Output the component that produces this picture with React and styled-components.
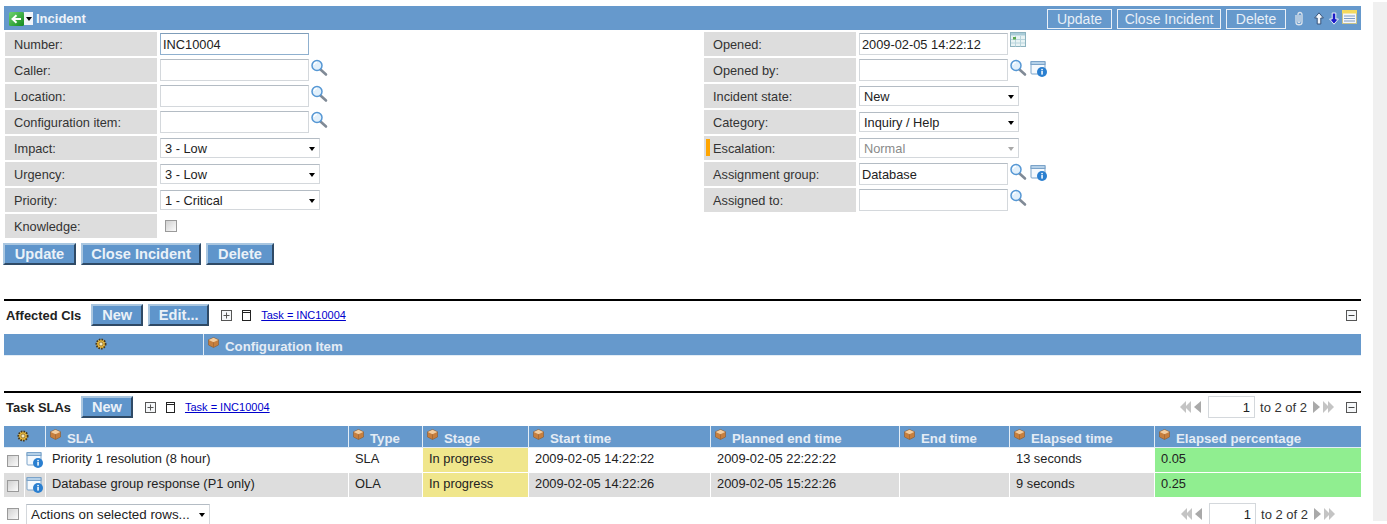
import React from "react";
import styled, { createGlobalStyle } from "styled-components";

const GlobalStyle = createGlobalStyle`
  html, body {
    margin: 0;
    padding: 0;
    background: #fff;
    overflow: hidden;
  }
  body {
    font-family: "Liberation Sans", Arial, sans-serif;
    font-size: 13px;
    color: #222;
  }
`;

const BLUE = "#6699cc";
const HEAD_TEXT = "#e4ecf5";

const Page = styled.div`
  display: flex;
  height: 524px;
  overflow: hidden;
`;
const Main = styled.div`
  flex: 0 0 1373px;
  padding: 6px 12px 0 4px;
  box-sizing: border-box;
`;
const ScrollRail = styled.div`
  flex: 0 0 14px;
  margin-top: 2px;
  height: 519px;
  background: #f0f0f0;
`;

const TitleBar = styled.div`
  display: flex;
  align-items: center;
  height: 24px;
  background: ${BLUE};
  padding: 0 4px 0 5px;
`;
const BackGroup = styled.div`
  display: flex;
  align-items: center;
  margin-top: 1px;
`;
const MenuCaret = styled.span`
  display: flex;
  align-items: center;
  justify-content: center;
  width: 9px;
  height: 13px;
  background: #f2f5f9;
  &::after {
    content: "";
    border-left: 3px solid transparent;
    border-right: 3px solid transparent;
    border-top: 4px solid #000;
  }
`;
const Title = styled.span`
  margin-left: 3px;
  font-size: 13px;
  font-weight: bold;
  color: #eef3f9;
`;
const TitleActions = styled.div`
  display: flex;
  align-items: center;
  margin-left: auto;
  margin-top: 1px;
`;
const TitleButton = styled.button`
  height: 20px;
  width: ${(p) => p.$w}px;
  margin-right: 5px;
  padding: 0;
  background: transparent;
  border: 1px solid #eaf0f7;
  color: #e8eff7;
  font: 14px "Liberation Sans", Arial, sans-serif;
`;
const TitleIcons = styled.div`
  display: flex;
  align-items: flex-start;
  height: 20px;
  margin-left: 2px;
  margin-top: -1px;
`;

const Form = styled.div`
  display: grid;
  grid-template-columns: 699px 1fr;
  padding: 2px 0 0 1px;
`;
const FormColumn = styled.div`
  display: flex;
  flex-direction: column;
  gap: 2px;
`;
const Row = styled.div`
  display: flex;
  align-items: center;
  height: 24px;
`;
const Label = styled.label`
  position: relative;
  display: flex;
  align-items: center;
  flex: 0 0 152px;
  height: 24px;
  margin-right: 3px;
  padding: 1px 0 0 9px;
  box-sizing: border-box;
  background: #dddddd;
  font-size: 12.75px;
  color: #333;
`;
const Mandatory = styled.span`
  position: absolute;
  left: 2px;
  top: 3px;
  width: 4px;
  height: 17px;
  background: #ffa500;
`;
const TextField = styled.input`
  width: 149px;
  height: 22px;
  box-sizing: border-box;
  padding: 1px 2px 0;
  border: 1px solid ${(p) => (p.$focus ? "#8fb0cf" : "#d4d8dc")};
  border-top-color: ${(p) => (p.$focus ? "#7f9db9" : "#b4bcc4")};
  background: #fff;
  color: #222;
  font: 12.8px "Liberation Sans", Arial, sans-serif;
  outline: none;
`;
const SelectBox = styled.div`
  position: relative;
  display: flex;
  align-items: center;
  flex: none;
  width: ${(p) => p.$w || 160}px;
  height: ${(p) => p.$h || 20}px;
  box-sizing: border-box;
  padding: 0 0 0 4px;
  border: 1px solid #d4d8dc;
  border-top-color: #b4bcc4;
  background: #fff;
  color: ${(p) => (p.$disabled ? "#8a8a8a" : "#222")};
  font-size: ${(p) => p.$size || 12.8}px;
  &::after {
    content: "";
    position: absolute;
    right: 4px;
    top: 8px;
    border-left: 3.5px solid transparent;
    border-right: 3.5px solid transparent;
    border-top: 4px solid ${(p) => (p.$disabled ? "#a8a8a8" : "#000")};
  }
`;
const Check = styled.input.attrs({ type: "checkbox" })`
  appearance: none;
  flex: none;
  width: 12px;
  height: 12px;
  margin: 0;
  border: 1px solid #9a9a9a;
  background: linear-gradient(135deg, #d0d0d0, #fbfbfb);
`;
const FieldCheck = styled(Check)`
  margin-left: 5px;
`;
const IconWrap = styled.span`
  display: inline-flex;
  flex: none;
  align-self: flex-start;
  margin-top: ${(p) => p.$top ?? 1}px;
  margin-left: ${(p) => p.$left ?? 1}px;
`;

const ActionRow = styled.div`
  display: flex;
  gap: 5px;
  margin: 5px 0 0 -1px;
`;
const Button = styled.button`
  height: 22px;
  width: ${(p) => p.$w}px;
  padding: 0;
  box-sizing: border-box;
  background: #5f95cb;
  border: 2px solid;
  border-color: #a9c6e0 #2f4a66 #2f4a66 #a9c6e0;
  color: #eaf1f8;
  font: bold 14.6px "Liberation Sans", Arial, sans-serif;
`;

const Section = styled.section`
  margin-top: ${(p) => p.$top}px;
  border-top: 2px solid #000;
`;
const Toolbar = styled.div`
  display: flex;
  align-items: center;
  height: 33px;
  padding: 0 4px 5px 2px;
  box-sizing: border-box;
`;
const SectionName = styled.span`
  margin-right: 10px;
  padding-top: 1px;
  font-size: 12.9px;
  font-weight: bold;
  color: #222;
`;
const ToolButtons = styled.div`
  display: flex;
  gap: 5px;
`;
const BoxToggle = styled.span`
  display: inline-flex;
  margin-left: ${(p) => p.$left ?? 0}px;
`;
const FilterLink = styled.a`
  margin-left: 10px;
  color: #0000cc;
  font-size: 11px;
  text-decoration: underline;
`;
const ToolRight = styled.div`
  display: flex;
  align-items: center;
  margin-left: auto;
`;
const Pager = styled.div`
  display: flex;
  align-items: center;
  color: #333;
  font-size: 13px;
  margin-right: ${(p) => p.$right ?? 0}px;
`;
const PagerGap = styled.span`
  width: 5px;
`;
const PageInput = styled.input`
  width: 47px;
  height: 22px;
  box-sizing: border-box;
  margin: 0 5px 0 6px;
  padding: 0 4px;
  border: 1px solid #d4d8dc;
  text-align: right;
  color: #222;
  font: 13px "Liberation Sans", Arial, sans-serif;
`;

const HeadRow = styled.div`
  display: grid;
  grid-template-columns: ${(p) => p.$cols};
  height: 21px;
  background: ${BLUE};
  border-bottom: 1px solid #e3edf6;
`;
const HeadCell = styled.div`
  display: flex;
  align-items: flex-start;
  justify-content: ${(p) => (p.$center ? "center" : "flex-start")};
  padding-top: ${(p) => (p.$center ? 4 : 3)}px;
  padding-left: ${(p) => (p.$center ? 0 : 4)}px;
  padding-right: ${(p) => p.$gearPad ?? 0}px;
  box-sizing: border-box;
  border-left: ${(p) => (p.$first ? "none" : "1px solid #e3edf6")};
  color: ${HEAD_TEXT};
  font-size: 13.25px;
  font-weight: bold;
  white-space: nowrap;
`;
const HeadText = styled.span`
  margin: 2px 0 0 6px;
`;
const BodyRow = styled.div`
  display: grid;
  grid-template-columns: ${(p) => p.$cols};
  height: 24px;
  margin-bottom: 1px;
  background: ${(p) => (p.$alt ? "#dddddd" : "#fff")};
`;
const BodyCell = styled.div`
  display: flex;
  align-items: center;
  padding: 0 0 3px 6px;
  box-sizing: border-box;
  border-left: 1px solid #fff;
  background: ${(p) => p.$bg || "transparent"};
  color: #222;
  font-size: 12.85px;
  white-space: nowrap;
`;
const RowTools = styled.div`
  display: grid;
  grid-template-columns: 20px 21px;
`;
const CheckCell = styled.div`
  display: flex;
  align-items: center;
  padding: 2px 0 0 3px;
`;
const InfoCell = styled.div`
  display: flex;
  align-items: center;
  padding-left: 1px;
  border-left: 1px solid #fff;
`;
const Footer = styled.div`
  display: flex;
  align-items: flex-start;
  margin-top: 7px;
  padding-left: 3px;
`;
const FooterCheck = styled(Check)`
  margin: 4px 7px 0 0;
`;
const FooterPager = styled.div`
  margin: -1px 26px 0 auto;
`;

/* drawn icons */
const Magnifier = () => (
  <svg width="18" height="18" viewBox="0 0 18 18">
    <path d="M10.5 10.5 L16 15.5" stroke="#808a96" strokeWidth="2.6" strokeLinecap="round" />
    <circle cx="7" cy="6.5" r="5" fill="#e2f0fb" stroke="#5597d4" strokeWidth="1.5" />
    <path d="M4 6 A3.2 3.2 0 0 1 7 3.4" fill="none" stroke="#fff" strokeWidth="1.2" />
  </svg>
);
const InfoWindow = () => (
  <svg width="18" height="18" viewBox="0 0 18 18">
    <rect x="1" y="1.5" width="14" height="12.5" rx="1" fill="#f5f9fd" stroke="#7ba3c9" />
    <rect x="1" y="1.5" width="14" height="3" fill="#b4d0e8" stroke="#7ba3c9" />
    <circle cx="12" cy="12" r="5" fill="#2a7fd0" />
    <rect x="11.3" y="11" width="1.5" height="3.6" fill="#fff" />
    <rect x="11.3" y="8.9" width="1.5" height="1.4" fill="#fff" />
  </svg>
);
const Calendar = () => (
  <svg width="16" height="16" viewBox="0 0 16 16">
    <rect x="0.5" y="0.5" width="15" height="14" fill="#e8f3f4" stroke="#8db3bf" />
    <rect x="1" y="1" width="14" height="2.5" fill="#a9ccd8" />
    <path d="M1 7.5H15M1 11H15M5.5 4V14.5M10.5 4V14.5" stroke="#b8d4dc" />
    <rect x="3" y="5" width="3" height="2.5" fill="#5aa84f" />
  </svg>
);
const Clip = () => (
  <svg width="12" height="16" viewBox="0 0 12 16">
    <path
      d="M3 4V11.5C3 14.5 9 14.5 9 11.5V3.5C9 .8 5 .8 5 3.5V10.5C5 11.8 7 11.8 7 10.5V4"
      fill="none"
      stroke="#dbe3ec"
      strokeWidth="1.3"
    />
  </svg>
);
const ArrowUp = ({ fill, stroke }) => (
  <svg width="10" height="13" viewBox="0 0 10 13">
    <path d="M5 .8 L9.4 6 H6.8 V12 H3.2 V6 H.6 Z" fill={fill} stroke={stroke} />
  </svg>
);
const ArrowDown = ({ fill, stroke }) => (
  <svg width="10" height="13" viewBox="0 0 10 13">
    <path d="M5 12.2 L9.4 7 H6.8 V1 H3.2 V7 H.6 Z" fill={fill} stroke={stroke} />
  </svg>
);
const Notes = () => (
  <svg width="15" height="14" viewBox="0 0 15 14">
    <rect x="0.5" y="0.5" width="14" height="13" fill="#f4f6fb" stroke="#c9c38a" />
    <rect x="0" y="0" width="15" height="3.5" fill="#f5d95d" />
    <path d="M2 6H13M2 8.5H13M2 11H13" stroke="#7c9cc6" />
  </svg>
);
const BackArrow = () => (
  <svg width="15" height="14" viewBox="0 0 15 14">
    <defs>
      <linearGradient id="backFill" x1="0" y1="0" x2="1" y2="1">
        <stop offset="0" stopColor="#6fd36f" />
        <stop offset="1" stopColor="#128a1e" />
      </linearGradient>
    </defs>
    <rect width="15" height="14" rx="1.5" fill="url(#backFill)" />
    <path d="M12 7H4.5M7.5 3.2 3.5 7l4 3.8" fill="none" stroke="#fff" strokeWidth="2" />
  </svg>
);
const Cube = () => (
  <svg width="11" height="11" viewBox="0 0 11 11">
    <path d="M5.5 .5 10.5 2.8V8L5.5 10.5.5 8V2.8Z" fill="#c77f3e" stroke="#8a5a30" strokeWidth=".6" />
    <path d="M.8 3 5.5 5.2 10.2 3 5.5 .8Z" fill="#f2cda0" />
    <path d="M5.5 5.2V10.3" stroke="#8a5a30" strokeWidth=".5" />
  </svg>
);
const Gear = () => (
  <svg width="12" height="12" viewBox="0 0 12 12">
    <circle cx="6" cy="6" r="4.6" fill="#e8b83c" stroke="#4a3818" strokeWidth="1.8" strokeDasharray="1.6 1.1" />
    <circle cx="6" cy="6" r="2" fill="#f6ecc0" stroke="#7a5c20" strokeWidth=".7" />
  </svg>
);
const PlusBox = () => (
  <svg width="11" height="11" viewBox="0 0 11 11">
    <rect x=".5" y=".5" width="10" height="10" fill="#f5f7f9" stroke="#555" />
    <path d="M2.5 5.5H8.5M5.5 2.5V8.5" stroke="#555" />
  </svg>
);
const MinusBox = () => (
  <svg width="11" height="11" viewBox="0 0 11 11">
    <rect x=".5" y=".5" width="10" height="10" fill="#f5f7f9" stroke="#555" />
    <path d="M2.5 5.5H8.5" stroke="#444" />
  </svg>
);
const DocBox = () => (
  <svg width="9" height="11" viewBox="0 0 9 11">
    <rect x=".5" y=".5" width="8" height="10" fill="#fff" stroke="#222" />
    <path d="M1 2.5H8" stroke="#222" />
  </svg>
);
const PageArrows = ({ back }) => (
  <svg width="22" height="12" viewBox="0 0 22 12">
    <g transform={back ? undefined : "translate(22 0) scale(-1 1)"}>
      <path d="M0 6 6 0V12Z" fill="#c4c4c4" />
      <path d="M5 6 11 0V12Z" fill="#c4c4c4" />
      <path d="M14 6 21 0V12H21Z" fill="#a9a9a9" />
    </g>
  </svg>
);

const leftFields = [
  { label: "Number:", value: "INC10004", focus: true },
  { label: "Caller:", search: true },
  { label: "Location:", search: true },
  { label: "Configuration item:", search: true },
  { label: "Impact:", select: "3 - Low" },
  { label: "Urgency:", select: "3 - Low" },
  { label: "Priority:", select: "1 - Critical" },
  { label: "Knowledge:", check: true },
];
const rightFields = [
  { label: "Opened:", value: "2009-02-05 14:22:12", calendar: true },
  { label: "Opened by:", search: true, info: true },
  { label: "Incident state:", select: "New" },
  { label: "Category:", select: "Inquiry / Help" },
  { label: "Escalation:", select: "Normal", disabled: true, mandatory: true },
  { label: "Assignment group:", value: "Database", search: true, info: true },
  { label: "Assigned to:", search: true },
];

const slaCols = "41px 303px 74px 106px 182px 189px 110px 145px 1fr";
const slaHeads = ["SLA", "Type", "Stage", "Start time", "Planned end time", "End time", "Elapsed time", "Elapsed percentage"];
const slaRows = [
  {
    name: "Priority 1 resolution (8 hour)",
    type: "SLA",
    start: "2009-02-05 14:22:22",
    end: "2009-02-05 22:22:22",
    elapsed: "13 seconds",
    pct: "0.05",
  },
  {
    name: "Database group response (P1 only)",
    type: "OLA",
    start: "2009-02-05 14:22:26",
    end: "2009-02-05 15:22:26",
    elapsed: "9 seconds",
    pct: "0.25",
    alt: true,
  },
];

const Field = ({ f }) => (
  <Row>
    <Label>
      {f.mandatory && <Mandatory />}
      {f.label}
    </Label>
    {f.select ? (
      <SelectBox $disabled={f.disabled}>{f.select}</SelectBox>
    ) : f.check ? (
      <FieldCheck />
    ) : (
      <TextField defaultValue={f.value || ""} $focus={f.focus} />
    )}
    {f.search && (
      <IconWrap>
        <Magnifier />
      </IconWrap>
    )}
    {f.info && (
      <IconWrap $left={3} $top={2}>
        <InfoWindow />
      </IconWrap>
    )}
    {f.calendar && (
      <IconWrap $left={2} $top={0}>
        <Calendar />
      </IconWrap>
    )}
  </Row>
);

const PagerBlock = ({ right }) => (
  <Pager $right={right}>
    <PageArrows back />
    <PageInput defaultValue="1" />
    to 2 of 2
    <PagerGap />
    <PageArrows />
  </Pager>
);

export default function App() {
  return (
    <Page>
      <GlobalStyle />
      <Main>
        <TitleBar>
          <BackGroup>
            <BackArrow />
            <MenuCaret />
          </BackGroup>
          <Title>Incident</Title>
          <TitleActions>
            <TitleButton $w={65}>Update</TitleButton>
            <TitleButton $w={104}>Close Incident</TitleButton>
            <TitleButton $w={60}>Delete</TitleButton>
            <TitleIcons>
              <IconWrap $left={0} $top={3}>
                <Clip />
              </IconWrap>
              <IconWrap $left={9} $top={4}>
                <ArrowUp fill="#f2f6fb" stroke="#39557a" />
              </IconWrap>
              <IconWrap $left={5} $top={4}>
                <ArrowDown fill="#1a1ac8" stroke="#e8eef6" />
              </IconWrap>
              <IconWrap $left={3} $top={2}>
                <Notes />
              </IconWrap>
            </TitleIcons>
          </TitleActions>
        </TitleBar>

        <Form>
          <FormColumn>
            {leftFields.map((f) => (
              <Field key={f.label} f={f} />
            ))}
          </FormColumn>
          <FormColumn>
            {rightFields.map((f) => (
              <Field key={f.label} f={f} />
            ))}
          </FormColumn>
        </Form>

        <ActionRow>
          <Button $w={73}>Update</Button>
          <Button $w={120}>Close Incident</Button>
          <Button $w={68}>Delete</Button>
        </ActionRow>

        <Section $top={34}>
          <Toolbar>
            <SectionName>Affected CIs</SectionName>
            <ToolButtons>
              <Button $w={52}>New</Button>
              <Button $w={61}>Edit...</Button>
            </ToolButtons>
            <BoxToggle $left={12}>
              <PlusBox />
            </BoxToggle>
            <BoxToggle $left={10}>
              <DocBox />
            </BoxToggle>
            <FilterLink href="#">Task = INC10004</FilterLink>
            <ToolRight>
              <MinusBox />
            </ToolRight>
          </Toolbar>
          <HeadRow $cols="199px 1fr">
            <HeadCell $first $center $gearPad={6}>
              <Gear />
            </HeadCell>
            <HeadCell>
              <Cube />
              <HeadText>Configuration Item</HeadText>
            </HeadCell>
          </HeadRow>
        </Section>

        <Section $top={35}>
          <Toolbar>
            <SectionName>Task SLAs</SectionName>
            <ToolButtons>
              <Button $w={52}>New</Button>
            </ToolButtons>
            <BoxToggle $left={12}>
              <PlusBox />
            </BoxToggle>
            <BoxToggle $left={10}>
              <DocBox />
            </BoxToggle>
            <FilterLink href="#">Task = INC10004</FilterLink>
            <ToolRight>
              <PagerBlock right={12} />
              <MinusBox />
            </ToolRight>
          </Toolbar>
          <HeadRow $cols={slaCols}>
            <HeadCell $first $center $gearPad={4}>
              <Gear />
            </HeadCell>
            {slaHeads.map((h) => (
              <HeadCell key={h}>
                <Cube />
                <HeadText>{h}</HeadText>
              </HeadCell>
            ))}
          </HeadRow>
          {slaRows.map((r) => (
            <BodyRow key={r.name} $cols={slaCols} $alt={r.alt}>
              <RowTools>
                <CheckCell>
                  <Check />
                </CheckCell>
                <InfoCell>
                  <InfoWindow />
                </InfoCell>
              </RowTools>
              <BodyCell>{r.name}</BodyCell>
              <BodyCell>{r.type}</BodyCell>
              <BodyCell $bg="#f0e68c">In progress</BodyCell>
              <BodyCell>{r.start}</BodyCell>
              <BodyCell>{r.end}</BodyCell>
              <BodyCell />
              <BodyCell>{r.elapsed}</BodyCell>
              <BodyCell $bg="#90ee90">{r.pct}</BodyCell>
            </BodyRow>
          ))}
          <Footer>
            <FooterCheck />
            <SelectBox $w={184} $h={21} $size={13.35}>
              Actions on selected rows...
            </SelectBox>
            <FooterPager>
              <PagerBlock />
            </FooterPager>
          </Footer>
        </Section>
      </Main>
      <ScrollRail />
    </Page>
  );
}
